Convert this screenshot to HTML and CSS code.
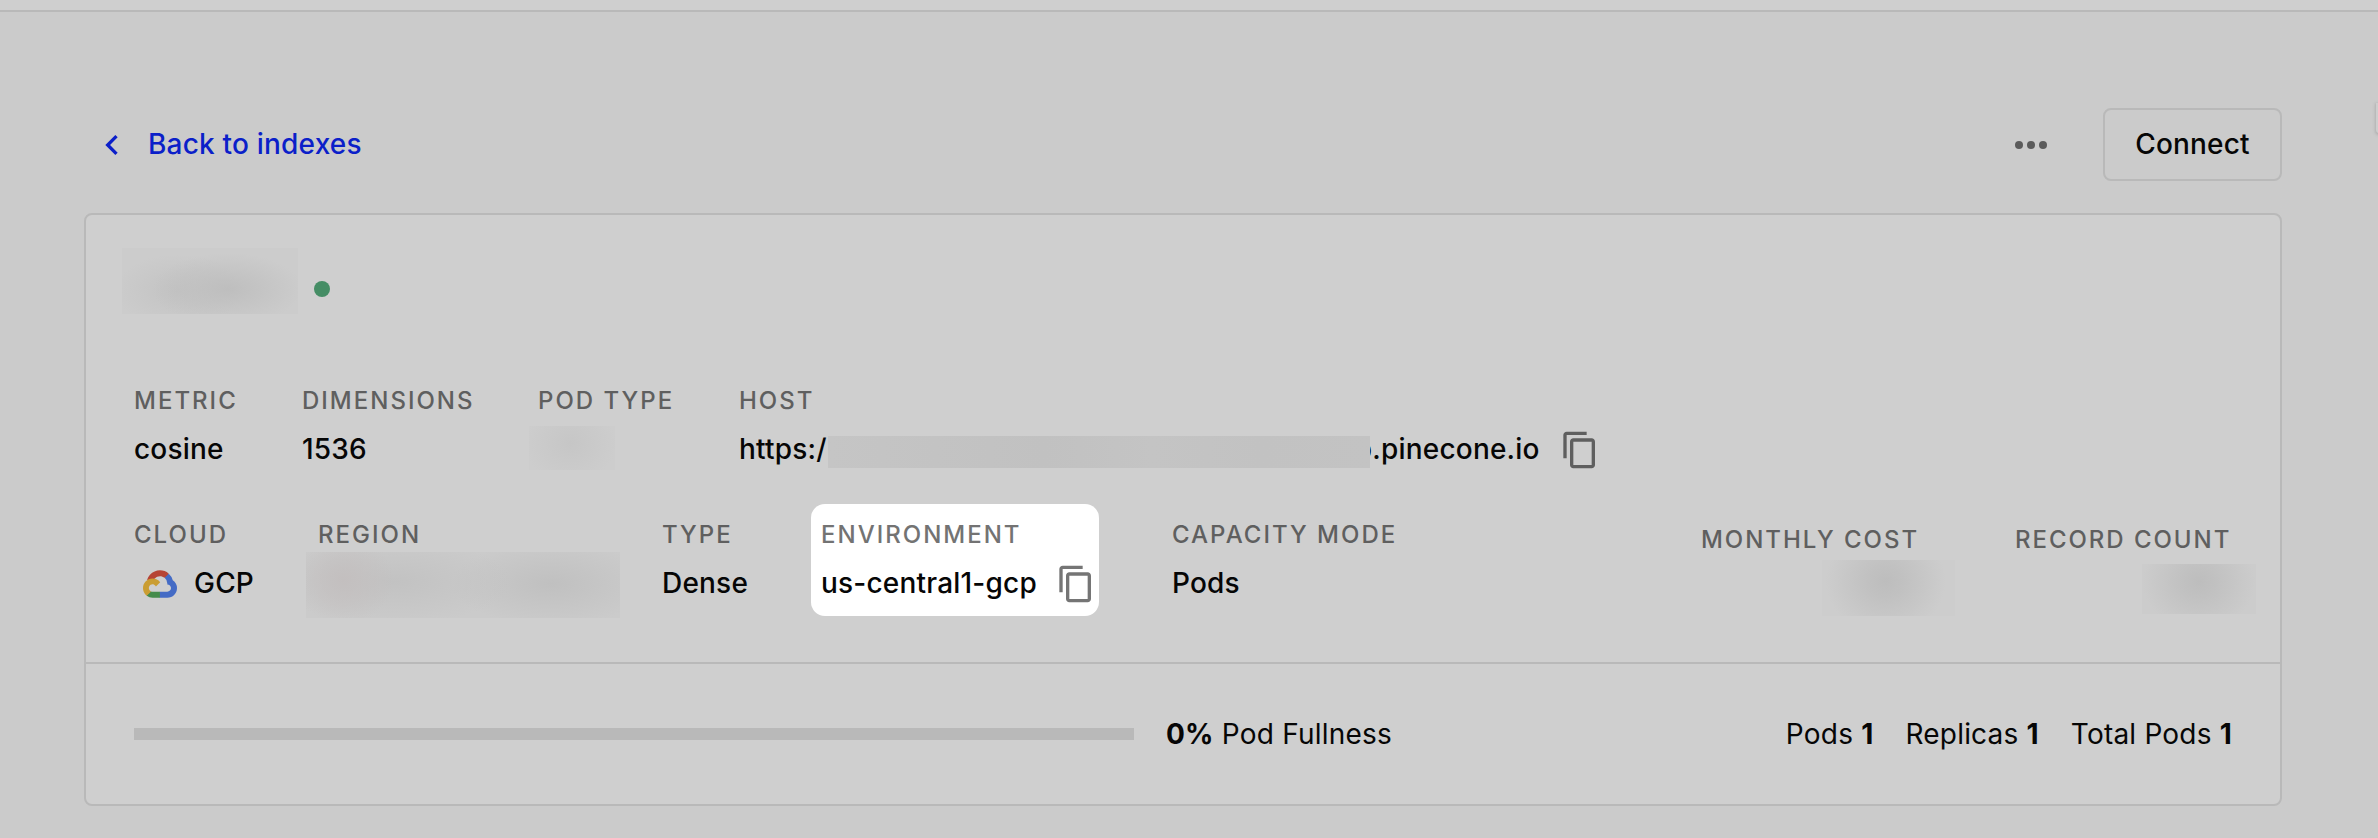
FILE: index.html
```html
<!DOCTYPE html>
<html lang="en">
<head>
<meta charset="utf-8">
<title>Index details</title>
<link rel="stylesheet" href="styles.css">
</head>
<body>
<div class="topbar"></div>
<div class="side-tab"></div>
<main class="page">
  <header class="toolbar">
    <a class="back">
      <svg class="icon" viewBox="0 0 24 24"><path d="M15.41 7.41 14 6l-6 6 6 6 1.41-1.41L10.83 12z"/></svg>
      <span>Back to indexes</span>
    </a>
    <div class="actions">
      <svg class="more" viewBox="0 0 24 24"><circle cx="6" cy="12" r="2"/><circle cx="12" cy="12" r="2"/><circle cx="18" cy="12" r="2"/></svg>
      <button class="connect">Connect</button>
    </div>
  </header>
  <section class="card">
    <div class="info">
      <div class="title"><span class="mask mask-name"></span><span class="status"></span></div>
      <div class="row row-one">
        <div class="field"><span class="label">METRIC</span><span class="value">cosine</span></div>
        <div class="field"><span class="label">DIMENSIONS</span><span class="value">1536</span></div>
        <div class="field"><span class="label">POD TYPE</span><span class="mask mask-pod"></span></div>
        <div class="field"><span class="label">HOST</span>
          <span class="value host"><span>https:/</span><span class="mask mask-host"></span><span class="domain">p.pinecone.io</span>
          <svg class="copy" viewBox="0 0 24 24"><path d="M16 1H4c-1.1 0-2 .9-2 2v14h2V3h12V1zm3 4H8c-1.1 0-2 .9-2 2v14c0 1.1.9 2 2 2h11c1.100 0 2-.9 2-2V7c0-1.100-.9-2-2-2zm0 16H8V7h11v14z"/></svg></span>
        </div>
      </div>
      <div class="row row-two">
        <div class="field"><span class="label">CLOUD</span>
          <span class="value cloud">
          <svg class="gcp" viewBox="0 0 256 206">
            <path fill="#b64435" d="M170.252 56.819l22.253-22.253 1.483-9.37C153.437-11.677 88.976-7.496 52.42 33.92 42.267 45.423 34.734 59.764 30.717 74.573l7.97-1.123 44.505-7.34 3.436-3.513c19.797-21.742 53.27-24.667 76.128-6.168l7.496.39z"/>
            <path fill="#446bc5" d="M224.205 73.918a100.249 100.249 0 0 0-30.217-48.722l-31.232 31.232a55.515 55.515 0 0 1 20.379 44.037v5.544c15.35 0 27.797 12.445 27.797 27.796 0 15.352-12.446 27.485-27.797 27.485h-55.671l-5.466 5.934v33.34l5.466 5.231h55.67c39.93.311 72.553-31.494 72.864-71.424a72.303 72.303 0 0 0-31.793-60.453"/>
            <path fill="#458b4b" d="M71.87 205.796h55.593V161.29H71.87a27.275 27.275 0 0 1-11.4-2.498l-7.887 2.42-22.409 22.253-1.952 7.574a72.07 72.07 0 0 0 43.648 14.757"/>
            <path fill="#ca9d32" d="M71.87 61.425C31.94 61.664-.237 94.228.001 134.158a72.301 72.301 0 0 0 28.222 56.881l32.248-32.246c-13.99-6.322-20.208-22.786-13.887-36.776 6.32-13.99 22.786-20.208 36.775-13.888a27.796 27.796 0 0 1 13.887 13.888l32.248-32.248A72.224 72.224 0 0 0 71.87 61.425"/>
          </svg>
          <span>GCP</span></span>
        </div>
        <div class="field"><span class="label">REGION</span><span class="mask mask-region"></span></div>
        <div class="field"><span class="label">TYPE</span><span class="value">Dense</span></div>
        <div class="field highlight"><span class="label">ENVIRONMENT</span>
          <span class="value env"><span>us-central1-gcp</span>
          <svg class="copy" viewBox="0 0 24 24"><path d="M16 1H4c-1.1 0-2 .9-2 2v14h2V3h12V1zm3 4H8c-1.1 0-2 .9-2 2v14c0 1.1.9 2 2 2h11c1.100 0 2-.9 2-2V7c0-1.100-.9-2-2-2zm0 16H8V7h11v14z"/></svg></span>
        </div>
        <div class="field"><span class="label">CAPACITY MODE</span><span class="value">Pods</span></div>
        <div class="field stat"><span class="label">MONTHLY COST</span><span class="mask mask-cost"></span></div>
        <div class="field stat"><span class="label">RECORD COUNT</span><span class="mask mask-count"></span></div>
      </div>
    </div>
    <footer class="usage">
      <div class="bar"></div>
      <div class="fullness"><b>0%</b> Pod Fullness</div>
      <div class="counts"><span>Pods <b>1</b></span><span>Replicas <b>1</b></span><span>Total Pods <b>1</b></span></div>
    </footer>
  </section>
</main>
</body>
</html>
```
FILE: styles.css
```css
* { box-sizing: border-box; }
body {
  margin: 0;
  height: 838px;
  overflow: hidden;
  position: relative;
  background: #cbcbcb;
  color: #060606;
  font-family: Inter, "Liberation Sans", sans-serif;
  font-size: 28px;
  line-height: 40px;
}
svg { display: block; flex: none; }
.topbar { height: 12px; background: #cfcfcf; border-bottom: 2px solid #b9b9b9; }
.side-tab {
  position: absolute;
  right: -10px;
  top: 103px;
  width: 12px;
  height: 30px;
  border-radius: 0 0 0 3px;
  background: #cecece;
  box-shadow: 0 1px 3px 1px #b0b0b0;
}
.page { padding: 96px 96px 0 84px; }
.toolbar { display: flex; justify-content: space-between; align-items: center; height: 73px; }
.back { display: flex; align-items: center; gap: 16px; padding-left: 8px; color: #0b1fc9; font-weight: 500; letter-spacing: 0.2px; }
.back span { padding-bottom: 1px; }
.icon { width: 40px; height: 40px; fill: currentColor; }
.actions { display: flex; align-items: center; gap: 48px; }
.more { width: 48px; height: 48px; fill: #5b5b5b; }
.connect {
  width: 179px;
  height: 73px;
  padding: 0 0 1px;
  border: 2px solid #b9b9b9;
  border-radius: 8px;
  background: transparent;
  color: #060606;
  font: 500 28px/40px Inter, "Liberation Sans", sans-serif;
  letter-spacing: 0.2px;
}
.card { margin-top: 32px; height: 593px; border: 2px solid #b9b9b9; border-radius: 8px; background: #cfcfcf; }
.info { height: 449px; border-bottom: 2px solid #b9b9b9; }
.title { display: flex; align-items: center; gap: 16px; height: 148px; padding-left: 36px; }
.status { width: 16px; height: 16px; border-radius: 50%; background: #458d65; }
.row { display: grid; padding-left: 48px; }
.row-one { grid-template-columns: 168px 236px 201px 1fr; height: 141px; padding-top: 18px; }
.row-two { grid-template-columns: 184px 344px 149px 361px 529px 314px 1fr; height: 130px; }
.field { display: flex; flex-direction: column; align-items: flex-start; position: relative; white-space: nowrap; }
.row-two .field { padding-top: 11px; }
.row-two .stat { padding-top: 16px; }
.label { color: #5f5f5f; font-size: 24px; font-weight: 500; line-height: 40px; letter-spacing: 2px; }
.stat .label { letter-spacing: 1.95px; }
.value { display: flex; align-items: flex-start; height: 40px; margin-top: 9px; font-weight: 500; line-height: 38px; letter-spacing: 0.2px; }
.copy { width: 40px; height: 40px; margin-left: 20px; fill: #5f5f5f; }
.env .copy { margin-left: 19px; }
.cloud { gap: 17px; padding-left: 9px; }
.gcp { width: 34px; height: 28px; margin-top: 6px; }
.row-two .highlight { width: 288px; height: 112px; padding: 11px 0 0 10px; border-radius: 14px; background: #fff; }
.highlight .label { color: #737373; }
.highlight .copy { fill: #757575; }
.mask { display: block; }
.mask-name {
  width: 176px;
  height: 66px;
  margin-top: -16px;
  background:
    radial-gradient(ellipse 75px 36px at 60% 62%, #bebebe, transparent),
    radial-gradient(ellipse 64px 36px at 32% 64%, #c3c3c3, transparent),
    #cccccc;
}
.mask-pod { position: absolute; left: -9px; top: 45px; width: 86px; height: 44px; background: radial-gradient(ellipse 46px 40px at 48% 40%, #c6c6c6, #cdcdcd); }
.mask-host {
  position: relative;
  z-index: 1;
  width: 542px;
  height: 32px;
  margin: 6px 0 0 1px;
  background: linear-gradient(90deg, #c5c5c5, #c3c3c3 20%, #c1c1c1 40%, #c4c4c4 60%, #c2c2c2 80%, #c3c3c3);
}
.domain { margin-left: -15px; }
.mask-region {
  position: absolute;
  left: -12px;
  top: 48px;
  width: 314px;
  height: 66px;
  background:
    radial-gradient(ellipse 50px 44px at 12% 42%, #c3bfbf, transparent),
    radial-gradient(ellipse 120px 42px at 28% 45%, #c2c2c2, transparent),
    radial-gradient(ellipse 100px 42px at 78% 48%, #c0c0c0, transparent),
    #cbcbcb;
}
.mask-cost { position: absolute; left: 121px; top: 56px; width: 133px; height: 56px; background: radial-gradient(ellipse 60px 54px at 48% 38%, #bdbdbd, #c1c1c1 30%, #cdcdcd); }
.mask-count { position: absolute; left: 127px; top: 60px; width: 114px; height: 50px; background: radial-gradient(ellipse 56px 50px at 50% 36%, #bdbdbd, #c1c1c1 30%, #cccccc); }
.usage { display: flex; align-items: center; height: 140px; padding: 0 48px; letter-spacing: 0.2px; }
.bar { width: 1000px; height: 12px; background: #b9b9b9; }
.fullness { margin-left: 32px; }
.counts { display: flex; gap: 32px; margin-left: auto; }
b { font-weight: 700; }
```
